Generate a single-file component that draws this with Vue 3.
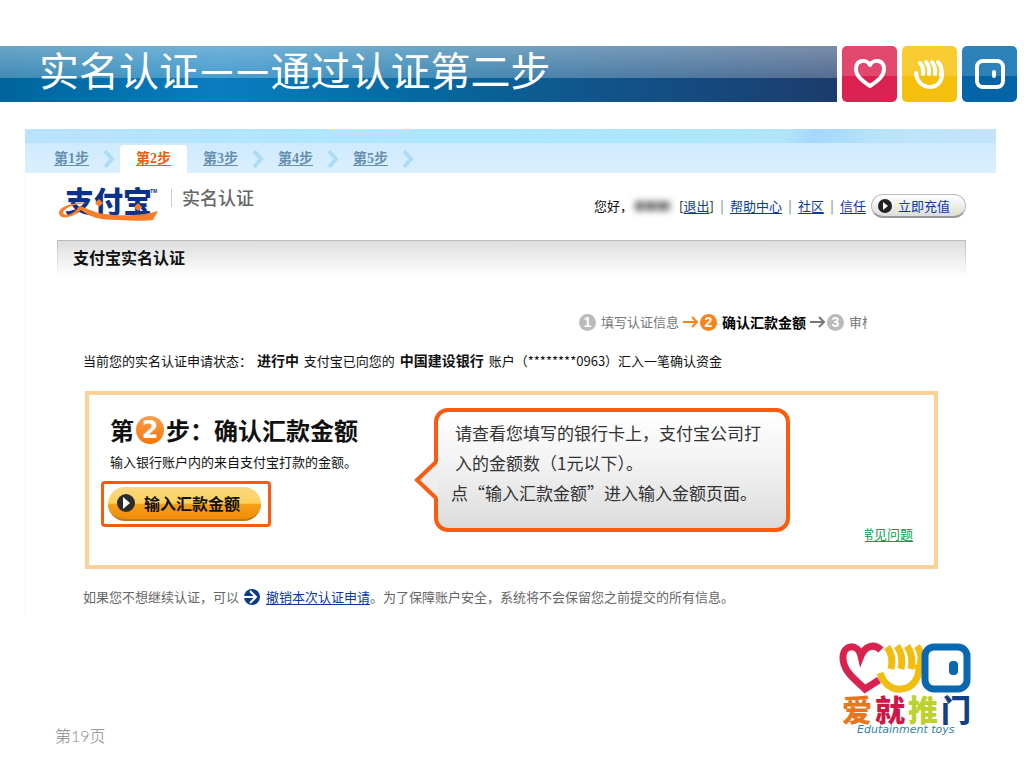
<template>
    <div class="slide" lang="zh-CN">
        <header class="slide-header">
            <h1 class="slide-title">实名认证<span class="dash">——</span>通过认证第二步</h1>
            <div class="tile pink">
                <svg viewBox="0 0 55 56">
                    <path d="M28 19C25 13 14 13 14 23C14 31 22 36 28 40C34 36 42 31 42 23C42 13 31 13 28 19Z"/>
                </svg>
            </div>
            <div class="tile yellow">
                <svg viewBox="0 0 55 56">
                    <path d="M14 27C15 36 21 41 28 41C36 41 41 34 40 26"/>
                    <path d="M18 17Q22 21 21 28M24 16Q28 21 27 28M30 16Q34 21 33 28M36 16Q41 21 39 29"/>
                </svg>
            </div>
            <div class="tile blue">
                <svg viewBox="0 0 55 56">
                    <rect x="15" y="15" width="26" height="26" rx="6"/>
                    <path d="M32 26V30"/>
                </svg>
            </div>
        </header>

        <main class="panel">
            <div class="sky"></div>
            <nav class="tabs">
                <template v-for="tab in tabs" :key="tab">
                    <a href="#" class="tab" :class="{ active: tab === 2 }">第{{ tab }}步</a>
                    <svg v-if="tab !== 2" class="chevron" viewBox="0 0 12 20">
                        <path d="M2 2L9 10L2 18"/>
                    </svg>
                </template>
            </nav>

            <div class="content">
                <div class="top-row">
                    <svg class="alipay" viewBox="0 0 104 38">
                        <text x="8" y="28">支付宝</text>
                        <path class="swoosh" d="M30 18C16 17 2 22 2 28C3 36 17 32 24 25C33 32 42 35 61 35C78 36 91 36 96 35L101 26C85 31 62 31 48 29C36 28 28 22 22 21C18 29 8 32 6 28C6 23 17 19 30 18Z"/>
                        <path class="swoosh" d="M42 14L46 18L42 22L38 18ZM81 18L85 22L81 26L77 22Z"/>
                        <text class="tm" x="93" y="8">TM</text>
                    </svg>
                    <span class="divider"></span>
                    <h2 class="product">实名认证</h2>
                    <div class="user">
                        <span>您好，</span>
                        <span class="masked"></span>
                        <span class="logout">[<a href="#">退出</a>]</span>
                        <template v-for="link in links" :key="link">
                            <i>|</i><a href="#">{{ link }}</a>
                        </template>
                        <button class="recharge" type="button">
                            <svg viewBox="0 0 14 14"><circle cx="7" cy="7" r="7" fill="#222"/><path d="M5 3L10 7L5 11Z" fill="#fff"/></svg>
                            立即充值
                        </button>
                    </div>
                </div>

                <h3 class="section-title">支付宝实名认证</h3>

                <ol class="steps">
                    <li><span class="num">1</span>填写认证信息</li>
                    <li class="current">
                        <svg viewBox="0 0 16 12"><path d="M0 6H14M9 1L14 6L9 11"/></svg>
                        <span class="num">2</span><b>确认汇款金额</b>
                    </li>
                    <li class="last">
                        <svg viewBox="0 0 16 12"><path d="M0 6H14M9 1L14 6L9 11"/></svg>
                        <span class="num">3</span><span class="clip">审核</span>
                    </li>
                </ol>

                <p class="status">
                    当前您的实名认证申请状态： <b>进行中</b> 支付宝已向您的 <b>中国建设银行</b> 账户（********0963）汇入一笔确认资金
                </p>

                <section class="box">
                    <div class="action">
                        <h2>第<span class="big-num">2</span>步：<span>确认汇款金额</span></h2>
                        <p>输入银行账户内的来自支付宝打款的金额。</p>
                        <div class="highlight">
                            <button class="pay" type="button">
                                <svg viewBox="0 0 20 20"><circle cx="10" cy="10" r="9" fill="#2b2b2b"/><path d="M7 4L14 10L7 16Z" fill="#fff"/></svg>
                                输入汇款金额
                            </button>
                        </div>
                    </div>
                    <div class="bubble">
                        <svg class="tail" viewBox="0 0 24 42">
                            <path d="M24 3L3 21L24 39Z" fill="#eee"/>
                            <path d="M22 3L3 21L22 39" fill="none" stroke="#fc5a0c" stroke-width="4"/>
                        </svg>
                        <p>请查看您填写的银行卡上，支付宝公司打<br>入的金额数（1元以下）。</p>
                        <p class="outdent">点“输入汇款金额”进入输入金额页面。</p>
                    </div>
                    <a href="#" class="faq"><span>常见问题</span></a>
                </section>

                <p class="cancel">
                    如果您不想继续认证，可以
                    <svg viewBox="0 0 18 18">
                        <circle cx="9" cy="9" r="8" fill="#0b3c8c"/>
                        <path d="M0 9H13M7 3L13 9L7 15" fill="none" stroke="#fff" stroke-width="2"/>
                    </svg>
                    <a href="#">撤销本次认证申请</a>。为了保障账户安全，系统将不会保留您之前提交的所有信息。
                </p>
            </div>
        </main>

        <footer class="slide-footer">
            <span class="page-no">第19页</span>
            <svg class="brand" viewBox="0 0 136 98">
                <g fill="none" stroke-width="7">
                    <path stroke="#d9234f" d="M43 10C36 3 27 6 23 16C20 3 5 4 5 18C5 32 19 41 27 49L41 40"/>
                    <path stroke="#f3bd10" d="M42 33C46 45 55 50 63 49C76 48 83 36 80 24"/>
                    <path stroke="#f3bd10" d="M49 7Q56 16 53 29M59 6Q66 16 63 29M69 6Q76 16 73 29M79 6Q85 14 82 26"/>
                    <rect stroke="#0868b1" x="87" y="7" width="42" height="42" rx="9"/>
                </g>
                <rect x="111" y="21" width="9" height="14" rx="4" fill="#0868b1"/>
                <g class="brand-name">
                    <text x="4" y="81" fill="#e8761c">爱</text>
                    <text x="37" y="81" fill="#cf1747">就</text>
                    <text x="70" y="81" fill="#bdd22c">推</text>
                    <text x="103" y="81" fill="#123f86">门</text>
                </g>
                <text class="brand-sub" x="19" y="93">Edutainment toys</text>
            </svg>
        </footer>
    </div>
</template>

<script setup>
const tabs = [1, 2, 3, 4, 5]
const links = ['帮助中心', '社区', '信任']
</script>

<style>
body {
    margin: 0;
    background: #fff;
}
</style>

<style scoped>
.slide {
    padding-top: 46px;
    font-family: "Noto Sans CJK SC", sans-serif;
    font-size: 13px;
    line-height: 20px;
    color: #111;
}
h1, h2, h3, p, ol {
    margin: 0;
    padding: 0;
}
svg {
    display: block;
    flex: none;
}
a {
    color: #0c3a9c;
    text-underline-offset: 2px;
}
button {
    font-family: inherit;
    cursor: pointer;
}
.slide-header {
    display: flex;
    align-items: flex-end;
    gap: 5px;
    padding-right: 7px;
}
.slide-title {
    flex: 1;
    box-sizing: border-box;
    height: 56px;
    padding-left: 39px;
    line-height: 46px;
    font-size: 40px;
    font-weight: 400;
    color: #fff;
    white-space: nowrap;
    background:
        linear-gradient(rgba(255, 255, 255, 0.42), rgba(255, 255, 255, 0.25) 57%, transparent 57%),
        linear-gradient(90deg, #00649b, #0a7dc0 26%, #0569a0 50%, #11548a 72%, #1c3c6c);
}
.dash {
    font-family: Lato, sans-serif;
    font-size: 45px;
}
.tile {
    width: 55px;
    height: 56px;
    border-radius: 5px;
}
.tile svg {
    fill: none;
    stroke: #fff;
    stroke-width: 4;
    stroke-linecap: round;
    stroke-linejoin: round;
}
.pink { background: linear-gradient(#e2476d 54%, #da2150 54%); }
.yellow { background: linear-gradient(#f8cc30 54%, #f4c00b 54%); }
.blue { background: linear-gradient(#2c81b9 54%, #0464a8 54%); }

.panel {
    margin: 27px 28px 0 25px;
}
.sky {
    height: 14px;
    background:
        linear-gradient(#f5df91, #f5df91) 305px 0 / 82px 1px no-repeat,
        linear-gradient(120deg, transparent 78%, rgba(160, 212, 255, 0.8) 81%, transparent 88%),
        linear-gradient(90deg, #b9e2fe, #ade7ff 40%, #ace6fb 70%, #c3e3fa);
}
.tabs {
    display: flex;
    align-items: flex-end;
    height: 30px;
    padding-left: 15px;
    background: linear-gradient(#ceeafe, #dbf0fe);
}
.tab {
    padding: 0 14px;
    line-height: 28px;
    font-family: "Liberation Serif", "Noto Sans CJK SC", serif;
    font-size: 14px;
    font-weight: 700;
    color: #6790ae;
}
.active {
    margin: 0 2px 0 5px;
    padding: 0 16px;
    border-radius: 4px 4px 0 0;
    background: #fff;
    color: #ee5d0b;
}
.chevron {
    width: 12px;
    height: 20px;
    margin-bottom: 4px;
    fill: none;
    stroke: #aedcf8;
    stroke-width: 4;
}
.content {
    padding: 12px 30px 8px 32px;
    border-left: 1px solid #f8fafc;
    margin-left: -1px;
}
.top-row {
    display: flex;
    align-items: flex-start;
}
.alipay {
    width: 104px;
    height: 38px;
    overflow: visible;
}
.alipay text {
    font-size: 29px;
    font-weight: 900;
    fill: #0b318a;
}
.alipay .tm {
    font-family: "Liberation Sans", sans-serif;
    font-size: 5px;
}
.swoosh {
    fill: #fa7d2a;
}
.divider {
    width: 1px;
    height: 18px;
    margin: 4px 10px 0;
    background: #ccc;
}
.product {
    padding-top: 2px;
    font-size: 18px;
    font-weight: 500;
    color: #666;
}
.user {
    display: flex;
    align-items: center;
    margin-left: auto;
    padding-top: 9px;
}
.user i {
    width: 16px;
    text-align: center;
    font-style: normal;
    color: #777;
}
.masked {
    width: 36px;
    height: 10px;
    margin: 0 8px 0 2px;
    background: repeating-linear-gradient(90deg, #777 0 8px, #aaa 8px 12px);
    filter: blur(3px);
}
.recharge {
    display: flex;
    align-items: center;
    gap: 6px;
    height: 24px;
    margin-left: 5px;
    padding: 0 15px 0 6px;
    border: 1px solid #bbb;
    border-bottom: 2px solid #999;
    border-radius: 12px;
    background: linear-gradient(#fff, #ddd);
    font-size: 13px;
    color: #0c3a9c;
}
.recharge svg {
    width: 14px;
    height: 14px;
}
.section-title {
    height: 36px;
    margin-top: 17px;
    padding-left: 15px;
    line-height: 32px;
    font-size: 16px;
    border: 1px solid #ccc;
    border-bottom: 0;
    background: linear-gradient(#dedede, #fff);
    border-image: linear-gradient(#bbb, #fff) 1;
}
.steps {
    display: flex;
    justify-content: flex-end;
    margin-top: 35px;
    padding-right: 99px;
    list-style: none;
    color: #777;
}
.steps li {
    display: flex;
    align-items: center;
}
.steps svg {
    width: 16px;
    height: 12px;
    margin: 0 1px 0 4px;
    fill: none;
    stroke: #777;
    stroke-width: 2;
}
.num {
    width: 17px;
    height: 17px;
    margin-right: 5px;
    border-radius: 50%;
    background: #bbb;
    color: #fff;
    font: 700 14px/17px "Liberation Sans", sans-serif;
    text-align: center;
}
.current b {
    font-size: 14px;
    color: #000;
}
.current .num {
    background: #f98317;
}
.steps .current svg {
    stroke: #f98317;
}
.clip {
    width: 18px;
    overflow: hidden;
    white-space: nowrap;
}
.status {
    margin: 18px 0 0 26px;
}
.status b {
    margin: 0 2px;
    font-size: 14px;
}
.box {
    display: flex;
    margin: 20px 28px 0;
    padding: 13px 21px 33px 12px;
    border: 4px solid #fdd196;
}
.action {
    width: 333px;
}
.action h2 {
    display: flex;
    align-items: center;
    padding: 7px 0 0 9px;
    font-size: 24px;
    line-height: 30px;
}
.big-num {
    width: 28px;
    height: 28px;
    margin: 0 2px;
    border-radius: 50%;
    background: linear-gradient(#f9a04c, #f97404);
    color: #fff;
    font: 700 24px/28px "DejaVu Sans", sans-serif;
    text-align: center;
}
.action p {
    padding: 7px 0 9px 9px;
}
.highlight {
    display: inline-block;
    padding: 3px 7px 3px 4px;
    border: 3px solid #fc5a0c;
    border-radius: 4px;
}
.pay {
    display: flex;
    align-items: center;
    gap: 8px;
    height: 34px;
    padding: 0 21px 0 8px;
    border: 0;
    border-bottom: 2px solid #c07a1c;
    border-radius: 17px;
    background: linear-gradient(#fbd783, #fbd25c 50%, #f5a01a 55%, #f18c08);
    font-size: 16px;
    font-weight: 700;
    color: #111;
}
.pay svg {
    width: 20px;
    height: 20px;
}
.bubble {
    position: relative;
    box-sizing: border-box;
    width: 356px;
    height: 124px;
    padding: 6px 0 0 17px;
    border: 4px solid #fc5a0c;
    border-radius: 14px;
    background: linear-gradient(#fff, #f4f4f4 40%, #dcdcdc);
    font-size: 17px;
    line-height: 30px;
    color: #333;
    white-space: nowrap;
}
.tail {
    position: absolute;
    left: -24px;
    top: 47px;
    width: 24px;
    height: 42px;
}
.outdent {
    margin-left: -4px;
}
.faq {
    display: flex;
    justify-content: flex-end;
    align-self: flex-end;
    width: 48px;
    margin-left: auto;
    margin-bottom: -12px;
    overflow: hidden;
    white-space: nowrap;
    color: #0d9c4b;
}
.cancel {
    display: flex;
    align-items: center;
    margin: 18px 0 0 26px;
    color: #666;
}
.cancel svg {
    width: 18px;
    height: 18px;
    margin: 0 5px 0 4px;
}
.slide-footer {
    display: flex;
    justify-content: space-between;
    align-items: flex-end;
    padding: 25px 50px 16px 55px;
}
.page-no {
    font-family: Lato, "Noto Sans CJK SC", sans-serif;
    font-size: 16px;
    font-weight: 300;
    color: #888;
}
.brand {
    width: 136px;
    height: 98px;
    margin-bottom: 8px;
}
.brand-name {
    font-size: 30px;
    font-weight: 900;
}
.brand-sub {
    font: italic 11px "DejaVu Sans", sans-serif;
    fill: #2f7fa5;
}
</style>
